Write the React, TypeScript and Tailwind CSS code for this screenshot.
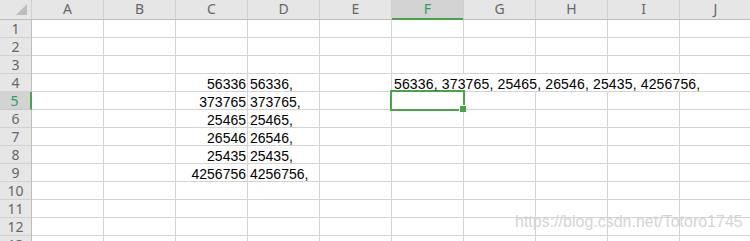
import React from "react";

const cols = ["A", "B", "C", "D", "E", "F", "G", "H", "I", "J"];
const rows = Array.from({ length: 13 }, (_, i) => i + 1);
const nums = ["56336", "373765", "25465", "26546", "25435", "4256756"];

function Cell({ row, col }: { row: number; col: string }) {
  const overflowHidden = row === 4 && (col === "F" || col === "G" || col === "H" || col === "I");
  const idx = row - 4;
  let content: React.ReactNode = null;
  if (col === "C" && idx >= 0 && idx < nums.length) {
    content = (
      <div className="text-right pr-[1px] whitespace-nowrap leading-[21px]">{nums[idx]}</div>
    );
  } else if (col === "D" && idx >= 0 && idx < nums.length) {
    content = (
      <div className="pl-[2px] whitespace-nowrap leading-[21px]">{nums[idx]},</div>
    );
  } else if (col === "F" && row === 4) {
    content = (
      <div className="relative z-10 pl-[2px] whitespace-nowrap leading-[21px] tracking-[0.15px]">
        {nums.map((n) => n + ",").join(" ")}
      </div>
    );
  }
  return (
    <div
      className={
        overflowHidden
          ? "w-[72px] shrink-0 h-[18px] border-b border-r border-b-[#d4d4d4] border-r-transparent"
          : "w-[72px] shrink-0 h-[18px] border-b border-r border-[#d4d4d4]"
      }
    >
      {content}
    </div>
  );
}

export default function App() {
  return (
    <div
      className="relative w-[750px] h-[241px] overflow-hidden bg-white text-black"
      style={{ fontFamily: '"Liberation Sans", Arial, sans-serif' }}
    >
      {/* Column header */}
      <div className="flex h-[20px] bg-[#e6e6e6] border-b border-[#bdbdbd] font-['Noto_Sans',sans-serif] text-[14px] leading-[17px] text-[#666666]">
        <div className="relative w-[32px] shrink-0 h-[19px] border-r border-[#cfcfcf]">
          <svg className="absolute left-[16px] top-[4px]" width="11" height="11" viewBox="0 0 11 11">
            <polygon points="11,0 11,11 0,11" fill="#bdbdbd" />
          </svg>
        </div>
        {cols.map((c) =>
          c === "F" ? (
            <div
              key={c}
              className="relative w-[72px] shrink-0 h-[19px] bg-[#d3d3d3] border-r border-[#cfcfcf] text-center text-[#2f9e5c]"
            >
              {c}
              <div className="absolute left-0 right-0 bottom-[-1px] h-[2px] bg-[#48a448]" />
            </div>
          ) : (
            <div key={c} className="w-[72px] shrink-0 h-[19px] border-r border-[#d0d0d0] text-center">
              {c}
            </div>
          )
        )}
      </div>

      {/* Rows */}
      {rows.map((r) => (
        <div key={r} className="flex h-[18px] text-[14px]">
          {r === 5 ? (
            <div className="w-[32px] shrink-0 h-[18px] bg-[#d3d3d3] border-b border-b-[#c8c8c8] border-r-2 border-r-[#48a448] text-center font-['Noto_Sans',sans-serif] leading-[17px] text-[#2f9e5c] pr-[1px]">
              {r}
            </div>
          ) : (
            <div className="w-[32px] shrink-0 h-[18px] bg-[#e6e6e6] border-b border-r border-b-[#d2d2d2] border-r-[#bdbdbd] text-center font-['Noto_Sans',sans-serif] leading-[17px] text-[#666666]">
              {r}
            </div>
          )}
          {cols.map((c) => (
            <Cell key={c} row={r} col={c} />
          ))}
        </div>
      ))}

      {/* Selection */}
      <div className="absolute left-[390px] top-[90px] w-[75px] h-[21px] border-2 border-[#48a448]" />
      <div className="absolute left-[459px] top-[105px] w-[7px] h-[7px] bg-[#48a448] border-l border-t border-white" />

      {/* Watermark */}
      <div className="absolute left-[515px] top-[214px] text-[16px] leading-[16px] text-[#d4d4d4] whitespace-nowrap">
        https://blog.csdn.net/Totoro1745
      </div>
    </div>
  );
}
